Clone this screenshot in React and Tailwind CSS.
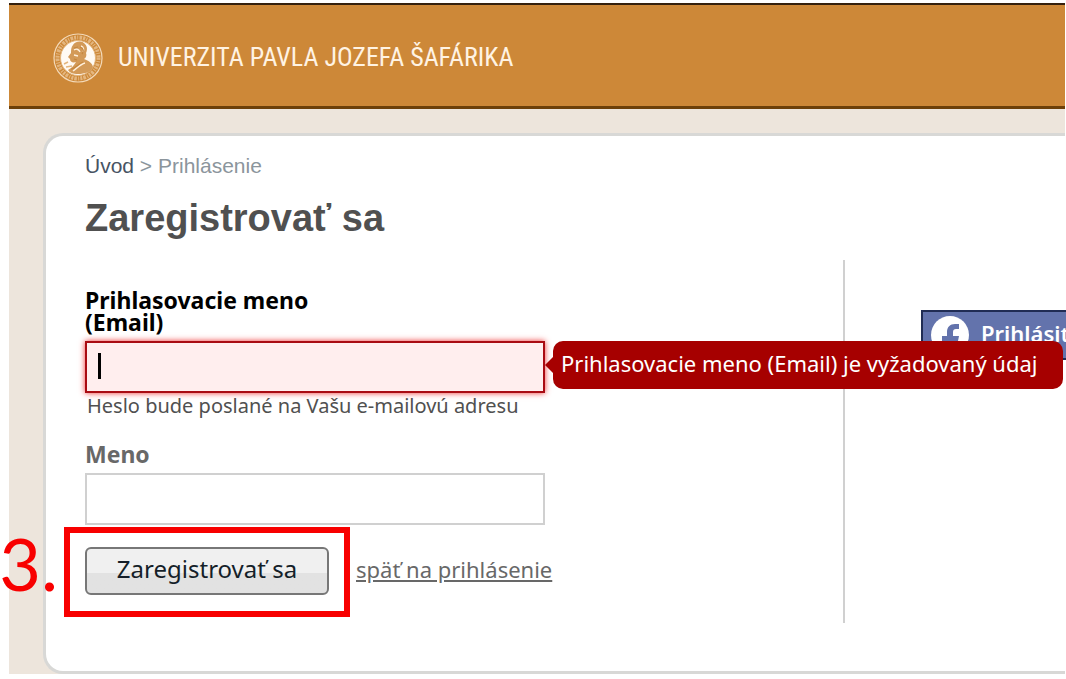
import { useState } from 'react'

const labelClasses = 'block text-[23px] leading-[22px] font-bold'
const inputClasses = 'mt-2 block h-[52px] w-full border-2 px-3 text-xl outline-none'

function Seal() {
  return (
    <svg viewBox="0 0 50 50" className="size-[50px] shrink-0" fill="none" aria-hidden="true">
      <circle cx="25" cy="25" r="24" stroke="#f3d9b8" strokeWidth="1.2" />
      <circle cx="25" cy="25" r="20.5" stroke="#efcfa6" strokeWidth="4" strokeDasharray="2 1.2 1 1.4 2.6 1" opacity="0.65" />
      <circle cx="25" cy="25" r="17.5" fill="#fffaf3" stroke="#e3b57c" strokeWidth="1" />
      <path d="M20 12c2-4 9-5 12-1 3 3 2 7 1 9 1 2 0 5-2 6 5 2 8 4 9 8-2 5-8 7-15 7-5 0-8-1-10-4 4-2 6-5 8-8-3 1-6 0-6-3l-2-2 3-4c0-3 0-6 2-8z" fill="#d39a58" />
      <path d="M21 17c3-2 5 0 6 2m-6 3 4 1m3-10c3 1 3 4 2 6M20 38c4-3 8-7 12-8" stroke="#fff0dc" strokeWidth="1.4" />
      <path d="M11 31l4-2m-2 5 6-1" stroke="#e3b57c" strokeWidth="1.4" />
      <path d="M27 14c4 1 4 5 2 7m-8-6 4-1m-4 12 3 1m-6 9c4 0 8-6 12-7" stroke="#c5873f" strokeWidth="1.2" />
    </svg>
  )
}

function FacebookMark() {
  return (
    <svg viewBox="0 0 38 38" className="size-[38px] shrink-0" aria-hidden="true">
      <circle cx="19" cy="19" r="19" fill="#fff" />
      <path d="M16 38V25h-5v-5h5v-4c0-5 3-8 8-8h4v5h-3c-2 0-3 1-3 3v4h6l-1 5h-5v13z" fill="#6373ac" />
    </svg>
  )
}

function ErrorBubble({ children }) {
  return (
    <div
      id="email-error"
      role="alert"
      className="absolute top-0 left-full z-10 ml-2 flex h-12 w-[510px] items-center rounded-[10px] bg-[#a60000] px-2 pb-1 text-[22px] whitespace-nowrap text-white"
    >
      <span className="absolute top-4 -left-2 border-y-8 border-r-8 border-y-transparent border-r-[#a60000]" />
      {children}
    </div>
  )
}

export default function App() {
  const [email, setEmail] = useState('')
  const [name, setName] = useState('')

  return (
    <div className="overflow-hidden bg-white pt-[3px] pr-px pb-1.5 pl-[9px] font-['Noto_Sans','Open_Sans',sans-serif]">
      <div className="bg-[#ede5dc]">
        <header className="flex h-[106px] items-center gap-[15px] border-t-2 border-b-3 border-t-[#35200d] border-b-[#6d4009] bg-[#cd8838] px-11 pt-1">
          <Seal />
          <p className="font-['Roboto_Condensed','Lato',sans-serif] text-[26px] whitespace-nowrap text-[#fff3e3]">
            UNIVERZITA PAVLA JOZEFA ŠAFÁRIKA
          </p>
        </header>

        <div className="pt-6 pl-[34px]">
          <main className="rounded-l-[20px] border-y-3 border-l-3 border-[#d8d8d6] bg-white pt-4 pb-12 pl-[39px]">
            <nav className="font-['Liberation_Sans',sans-serif] text-[21px] leading-7 text-[#8b959c]">
              <a href="#uvod" className="text-[#475363]">Úvod</a> &gt; <span>Prihlásenie</span>
            </nav>
            <h1 className="mt-4 font-['Liberation_Sans',sans-serif] text-[38px] leading-[44px] font-bold text-[#505050]">
              Zaregistrovať sa
            </h1>

            <div className="mt-5 flex">
              <form className="flex-1 pt-[29px] pb-7" onSubmit={e => e.preventDefault()}>
                <div className="w-[460px]">
                  <label htmlFor="email" className={`${labelClasses} w-60 text-black`}>
                    Prihlasovacie meno (Email)
                  </label>
                  <div className="relative">
                    <input
                      id="email"
                      type="email"
                      value={email}
                      onChange={e => setEmail(e.target.value)}
                      aria-invalid="true"
                      aria-describedby="email-error"
                      className={`${inputClasses} border-[#a90b12] bg-[#ffeeee] shadow-[0_0_6px_#e33]`}
                    />
                    <span className="absolute top-3 left-[13px] h-[26px] w-[3px] bg-black" />
                    <ErrorBubble>Prihlasovacie meno (Email) je vyžadovaný údaj</ErrorBubble>
                  </div>
                  <p className="pl-0.5 text-xl leading-[26px] text-[#505050]">Heslo bude poslané na Vašu e-mailovú adresu</p>

                  <label htmlFor="name" className={`${labelClasses} mt-6 text-[#686868]`}>
                    Meno
                  </label>
                  <input
                    id="name"
                    type="text"
                    value={name}
                    onChange={e => setName(e.target.value)}
                    className={`${inputClasses} border-[#d0d0d0] bg-white`}
                  />
                </div>

                <div className="mt-[22px] flex items-center gap-[27px]">
                  <div className="relative">
                    <button
                      type="submit"
                      className="block h-12 w-[244px] rounded-md border-2 border-[#777] bg-linear-to-b from-[#f0f0f0] from-55% to-[#e2e2e2] to-55% pb-1 text-2xl whitespace-nowrap text-[#151f29]"
                    >
                      Zaregistrovať sa
                    </button>
                    <div className="pointer-events-none absolute -inset-x-[21px] -top-5 -bottom-[22px] border-6 border-[#f80000]">
                      <span className="absolute right-full bottom-3 mr-3 font-['Lato',sans-serif] text-7xl text-[#f80000]">
                        3.
                      </span>
                    </div>
                  </div>
                  <a href="#prihlasenie" className="pb-1 text-[22px] text-[#686868] underline">späť na prihlásenie</a>
                </div>
              </form>

              <aside className="w-[222px] border-l-2 border-[#d0d0d0] pt-[50px] pl-[76px]">
                <button
                  type="button"
                  className="flex h-[50px] w-[300px] items-center gap-3 border-2 border-[#202c54] bg-[#6373ac] px-2 text-[22px] font-semibold whitespace-nowrap text-white"
                >
                  <FacebookMark />
                  <span className="pb-1">Prihlásiť</span>
                </button>
              </aside>
            </div>
          </main>
        </div>
      </div>
    </div>
  )
}
